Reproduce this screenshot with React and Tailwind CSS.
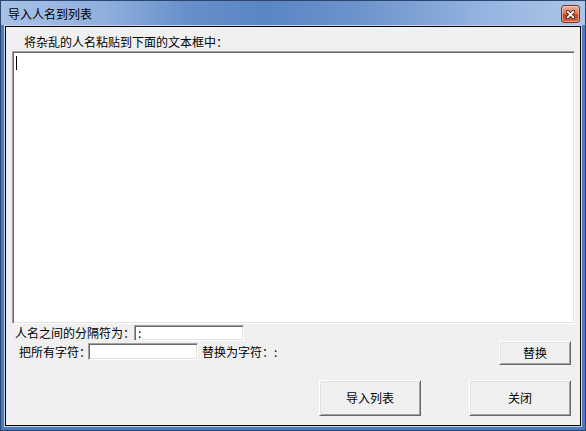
export default function App() {
  return (
    <div className="w-[586px] h-[431px] border border-[#2a4670] flex flex-col bg-[linear-gradient(90deg,#a7c1e5_0%,#8eafdd_18%,#6690ca_32%,#5a86c5_45%,#6d94cc_62%,#93b3df_82%,#adc6e8_100%)] [font-family:'Noto_Sans_CJK_SC','Noto_Sans_CJK_JP',sans-serif] text-black overflow-hidden">
      {/* title bar */}
      <div className="h-[24px] flex items-start justify-between pl-[7px] pr-[5px] shrink-0">
        <span className="mt-[6px] text-[12px] leading-[14px] whitespace-nowrap">导入人名到列表</span>
        <div className="mt-[4px] w-[19px] h-[18px] rounded-[3px] border border-[#7e3220] bg-[linear-gradient(180deg,#eeb3a2_0%,#dc7a5f_45%,#c7401f_55%,#d56a4b_100%)] flex items-center justify-center shadow-[inset_0_0_0_1px_rgba(255,220,200,0.5)]">
          <svg width="9" height="9" viewBox="0 0 9 9">
            <path d="M1.5 1.5 L7.5 7.5 M7.5 1.5 L1.5 7.5" stroke="#5a1f12" strokeWidth="3.4" strokeLinecap="square" />
            <path d="M1.8 1.8 L7.2 7.2 M7.2 1.8 L1.8 7.2" stroke="#ffffff" strokeWidth="1.8" strokeLinecap="square" />
          </svg>
        </div>
      </div>
      {/* frame */}
      <div className="flex-1 flex flex-col px-[3px] pb-[3px] bg-[#4c7abd]">
        <div className="flex-1 flex flex-col border border-[#c3d4ec]">
          <div className="flex-1 flex flex-col border border-black bg-[#f0f0f0] text-[12px]">
            <div className="ml-[18px] mt-[6px] h-[18px] leading-[18px] whitespace-nowrap">将杂乱的人名粘贴到下面的文本框中：</div>
            <div className="ml-[6px] w-[563px] h-[273px] bg-white border border-t-[#a0a0a0] border-l-[#a0a0a0] border-r-white border-b-white shadow-[inset_1px_1px_0_#696969,inset_-1px_-1px_0_#e3e3e3] pl-[3px] pt-[4px]">
              <div className="w-[1px] h-[14px] bg-black"></div>
            </div>
            <div className="mt-[1px] h-[16px] flex items-center">
              <span className="ml-[9px] w-[119px] leading-[16px] whitespace-nowrap">人名之间的分隔符为：</span>
              <div className="w-[110px] h-[16px] bg-white border border-t-[#a0a0a0] border-l-[#a0a0a0] border-r-white border-b-white shadow-[inset_1px_1px_0_#696969,inset_-1px_-1px_0_#e3e3e3] pl-[3px] leading-[14px] text-[12px]">:</div>
            </div>
            <div className="h-[24px] flex items-start">
              <span className="ml-[13px] mt-[2px] w-[69px] leading-[17px] whitespace-nowrap">把所有字符：</span>
              <div className="mt-[2px] w-[110px] h-[17px] bg-white border border-t-[#a0a0a0] border-l-[#a0a0a0] border-r-white border-b-white shadow-[inset_1px_1px_0_#696969,inset_-1px_-1px_0_#e3e3e3]"></div>
              <span className="ml-[4px] mt-[2px] leading-[17px] whitespace-nowrap">替换为字符：:</span>
              <button className="ml-auto mr-[9px] w-[72px] h-[24px] flex items-center justify-center bg-[#f0f0f0] border border-t-white border-l-white border-r-[#696969] border-b-[#696969] shadow-[inset_1px_1px_0_#e3e3e3,inset_-1px_-1px_0_#a0a0a0] text-[12px] leading-[14px]">替换</button>
            </div>
            <div className="mt-[15px] flex justify-end gap-[48px] pr-[9px]">
              <button className="w-[102px] h-[36px] flex items-center justify-center bg-[#f0f0f0] border border-t-white border-l-white border-r-[#696969] border-b-[#696969] shadow-[inset_1px_1px_0_#e3e3e3,inset_-1px_-1px_0_#a0a0a0] text-[12px] leading-[14px]">导入列表</button>
              <button className="w-[102px] h-[36px] flex items-center justify-center bg-[#f0f0f0] border border-t-white border-l-white border-r-[#696969] border-b-[#696969] shadow-[inset_1px_1px_0_#e3e3e3,inset_-1px_-1px_0_#a0a0a0] text-[12px] leading-[14px]">关闭</button>
            </div>
          </div>
        </div>
      </div>
    </div>
  );
}
